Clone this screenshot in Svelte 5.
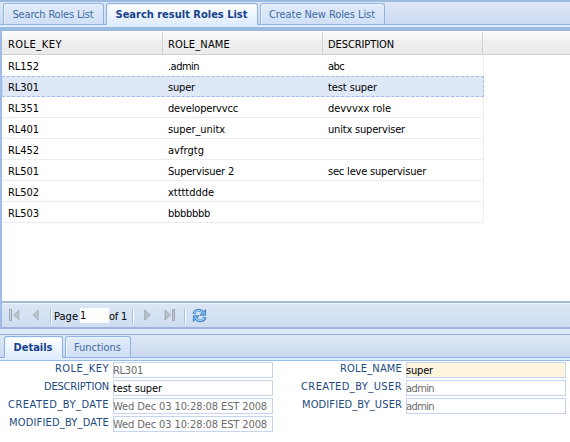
<script>
  const topTabs = [
    { label: 'Search Roles List', w: 101, text: 81 },
    { label: 'Search result Roles List', w: 152, text: 132, active: true },
    { label: 'Create New Roles List', w: 125, text: 106 }
  ];
  const bottomTabs = [
    { label: 'Details', w: 59, text: 39, active: true },
    { label: 'Functions', w: 66, text: 47 }
  ];
  const columns = [['ROLE_KEY', 54], ['ROLE_NAME', 62], ['DESCRIPTION', 66]];
  const rows = [
    [['RL152', 31], ['.admin', 31], ['abc', 16]],
    [['RL301', 31], ['super', 27], ['test super', 49]],
    [['RL351', 31], ['developervvcc', 70], ['devvvxx role', 63]],
    [['RL401', 31], ['super_unitx', 57], ['unitx superviser', 77]],
    [['RL452', 31], ['avfrgtg', 36], ['', 0]],
    [['RL501', 31], ['Supervisuer 2', 66], ['sec leve supervisuer', 98]],
    [['RL502', 31], ['xttttddde', 46], ['', 0]],
    [['RL503', 31], ['bbbbbbb', 42], ['', 0]]
  ];
  const left = [
    { label: 'ROLE_KEY', lw: 54, value: 'RL301', vw: 30 },
    { label: 'DESCRIPTION', lw: 65, value: 'test super', vw: 49, edit: true },
    { label: 'CREATED_BY_DATE', lw: 101, value: 'Wed Dec 03 10:28:08 EST 2008', vw: 154 },
    { label: 'MODIFIED_BY_DATE', lw: 100, value: 'Wed Dec 03 10:28:08 EST 2008', vw: 154 }
  ];
  const right = [
    { label: 'ROLE_NAME', lw: 62, value: 'super', vw: 27, edit: true, focus: true },
    { label: 'CREATED_BY_USER', lw: 101, value: 'admin', vw: 28 },
    { label: 'MODIFIED_BY_USER', lw: 100, value: 'admin', vw: 28 }
  ];

  // Tracks the text so that its run takes the given width.
  function fit(node, width) {
    const n = node.textContent.length;
    if (!n || !width) return;
    const natural = node.getBoundingClientRect().width;
    const gap = (width - natural) / n;
    node.style.letterSpacing = gap.toFixed(3) + 'px';
  }
</script>

{#snippet tabs(items)}
  {#each items as t}
    <div class="tab" class:active={t.active} style="width:{t.w}px">
      <span use:fit={t.text}>{t.label}</span>
    </div>
  {/each}
{/snippet}

{#snippet form(fields)}
  {#each fields as f}
    <div class="field">
      <div class="label"><span use:fit={f.lw}>{f.label}</span></div>
      <div class="value" class:edit={f.edit} class:focus={f.focus}><span use:fit={f.vw}>{f.value}</span></div>
    </div>
  {/each}
{/snippet}

<div class="app">
  <div class="strip top">{@render tabs(topTabs)}</div>
  <div class="under"></div>
  <div class="grid">
    <div class="head">
      {#each columns as [c, w]}
        <div class="hcell"><span use:fit={w}>{c}</span></div>
      {/each}
    </div>
    <div class="rows">
      {#each rows as r, i}
        <div class="row" class:selected={i === 1}>
          {#each r as [c, w]}
            <div class="cell"><span use:fit={w}>{c}</span></div>
          {/each}
        </div>
      {/each}
    </div>
  </div>
  <div class="toolbar">
    <svg class="first" width="11" height="12" viewBox="0 0 11 12">
      <path d="M.5.5h2v11h-2z" fill="#d0d4d9" stroke="#a0a6ae" /><path d="M10 1v10L4.500 6z" fill="#bcc1c8" stroke="#a4a9b0" stroke-width=".6" />
    </svg>
    <svg class="prev" width="7" height="12" viewBox="0 0 7 12"><path d="M6.300 1v10L.700 6z" fill="#bcc1c8" stroke="#a4a9b0" stroke-width=".6" /></svg>
    <i class="sep s1"></i>
    <span class="page"><span use:fit={24}>Page</span></span>
    <span class="num">1</span>
    <span class="of"><span use:fit={18}>of 1</span></span>
    <i class="sep s2"></i>
    <svg class="next" width="7" height="12" viewBox="0 0 7 12"><path d="M.700 1v10L6.300 6z" fill="#bcc1c8" stroke="#92989f" stroke-width=".7" /></svg>
    <svg class="last" width="11" height="12" viewBox="0 0 11 12">
      <path d="M8.500.5h2v11h-2z" fill="#c5c9ce" stroke="#a0a6ae" /><path d="M1 1v10L6.500 6z" fill="#bcc1c8" stroke="#92989f" stroke-width=".7" />
    </svg>
    <i class="sep s3"></i>
    <svg class="refresh" width="15" height="15" viewBox="0 0 15 15" fill="none">
      <path d="M1.800 6C3 1.800 8 .8 11 4.200" stroke="#3f83cb" stroke-width="2.800" />
      <path d="M13.600 1.500v5.700H7.900Z" fill="#6fb0ea" stroke="#3577bd" stroke-width=".8" stroke-linejoin="round" />
      <path d="M2.200 5.500C3.500 2.200 8 1.300 11 4.500" stroke="#a5d4f7" stroke-width="1.200" />
      <path d="M13.200 9C12 13.200 7 14.200 4 10.800" stroke="#3f83cb" stroke-width="2.800" />
      <path d="M1.400 13.500V7.800H7.100Z" fill="#6fb0ea" stroke="#3577bd" stroke-width=".8" stroke-linejoin="round" />
      <path d="M12.800 9.500C11.500 12.800 7 13.700 4 10.500" stroke="#a5d4f7" stroke-width="1.200" />
    </svg>
  </div>
  <div class="gap"></div>
  <div class="strip bottom">{@render tabs(bottomTabs)}</div>
  <div class="under2"></div>
  <div class="form">
    <div class="col c1">{@render form(left)}</div>
    <div class="col c2">{@render form(right)}</div>
  </div>
</div>

<style>
  :global(body) { background: #fff; }
  .app, .app * { box-sizing: border-box; }
  .app {
    width: 570px; height: 442px; overflow: hidden; background: #fff;
    font: 11px/14px "DejaVu Sans Condensed", "DejaVu Sans", sans-serif;
    font-stretch: condensed; color: #000; white-space: nowrap;
    display: flex; flex-direction: column;
  }
  .app > div { flex: none; }
  .strip { display: flex; align-items: flex-end; background: linear-gradient(#dfe8f6, #cad9ef); }
  .strip.top { height: 25px; border-top: 2px solid #9abbdf; border-bottom: 1px solid #8db2e3; padding-left: 3px; gap: 2px; background: linear-gradient(#dfe6f5, #cbdaf1); }
  .strip.bottom { height: 24px; border-top: 1px solid #99acdd; border-bottom: 1px solid #8db2e3; padding-left: 4px; gap: 2px; }
  .tab {
    height: 21px; border: 1px solid #8db2e3; border-bottom: 0; border-radius: 3px 3px 0 0;
    background: linear-gradient(#e2ecfa, #cfdff5); box-shadow: inset 1px 1px #edf4fd;
    color: #416aa3; padding: 4px 1px 0 0; text-align: center;
  }
  .tab.active { height: 22px; margin-bottom: -1px; color: #15428b; font-weight: bold; background: linear-gradient(#fff, #deecfd); position: relative; }
  .under { height: 6px; background: #9abbdf; border-top: 2px solid #deecfd; }
  .under2 { height: 3px; background: #deecfd; border-bottom: 1px solid #99bbe8; }
  .grid { height: 270px; border-left: 2px solid #9fbbe6; }
  .head { height: 24px; display: flex; background: linear-gradient(#fafafa 0%, #f5f5f5 38%, #eee 42%, #ebebeb 100%); border-bottom: 1px solid #d0d0d0; }
  .hcell { width: 160px; height: 22px; margin-top: 1px; padding: 6px 0 0 5px; border-right: 1px solid #d0d0d0; }
  .hcell:first-child { width: 161px; padding-left: 6px; }
  .rows { width: 482px; height: 168px; border-right: 1px solid #ededed; }
  .row { width: 482px; height: 21px; display: flex; border-bottom: 1px solid #ededed; }
  .row:first-child { border-bottom-color: #fff; }
  .row.selected { background: #dfe8f6; border: 1px dashed #a3bae9; border-left-color: #c4d4f0; }
  .cell { width: 160px; padding: 5px 0 0 5px; }
  .cell:first-child { width: 161px; padding-left: 6px; }
  .selected .cell { padding-top: 4px; }
  .selected .cell:first-child { width: 160px; padding-left: 5px; }
  .toolbar { height: 28px; border-left: 2px solid #9fbbe6; border-top: 2px solid #a3bad4; border-bottom: 2px solid #a0b2e1; background: linear-gradient(#dbe7f6, #cfddef); display: flex; align-items: flex-start; padding-top: 6px; box-shadow: inset 0 1px #e9f2fb; }
  .toolbar > * { flex: none; }
  .first { margin: 0 0 0 7px; }
  .prev { margin-left: 12px; }
  .sep { width: 2px; height: 14px; border-left: 1px solid #a6c0e3; border-right: 1px solid #fff; }
  .s1 { margin-left: 11px; }
  .page { width: 26px; margin-left: 2px; padding-top: 1px; }
  .num { width: 29px; height: 15px; margin-top: -1px; background: #fff; line-height: 15px; }
  .of { width: 23px; padding: 1px 0 0 0; }
  .next { margin-left: 10px; }
  .last { margin-left: 13px; }
  .s3 { margin-left: 9px; }
  .refresh { margin: -1px 0 0 6px; }
  .gap { height: 5px; background: #dceafa; }
  .form { display: flex; height: 81px; padding-top: 1px; }
  .c1 { width: 273px; }
  .c2 { width: 293px; }
  .field { height: 18px; display: flex; justify-content: flex-end; color: #1d4a80; }
  .label { padding-right: 4px; }
  .value { width: 160px; height: 16px; border: 1px solid #c5d5ed; color: #6b6b6b; line-height: 15px; background: #fff; }
  .value span { margin-left: -1px; }
  .value.edit { color: #000; }
  .value.focus { background: #fdf5dc; }
</style>
